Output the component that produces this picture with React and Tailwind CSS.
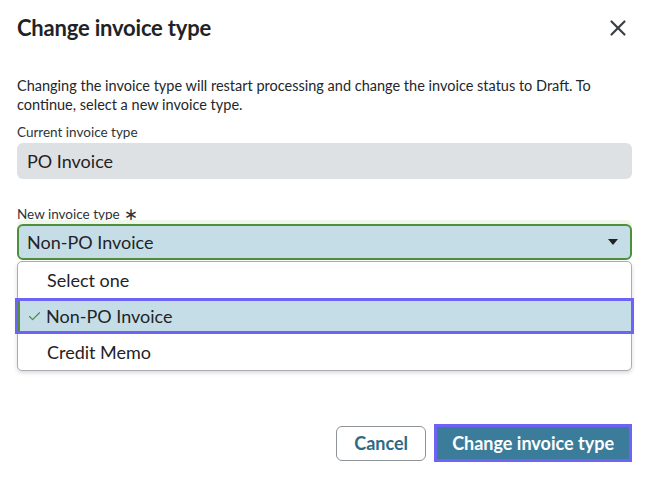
import { Check, X } from 'lucide-react'

const options = ['Select one', 'Non-PO Invoice', 'Credit Memo']

export default function App() {
  const selected = 'Non-PO Invoice'
  return (
    <div className="w-[649px] h-[500px] bg-white text-[#1f2326]" style={{ fontFamily: 'Lato, "Noto Sans", sans-serif' }}>
      <div className="flex items-center justify-between pl-[17px] pr-[18px] pt-[12px]">
        <h1 className="text-[22px] font-bold tracking-[-0.2px] leading-[32px]">Change invoice type</h1>
        <X size={26} strokeWidth={2} className="text-[#3a3f44]" />
      </div>

      <p className="px-[17px] mt-[32px] text-[14.5px] leading-[19px] text-[#23272b]">
        Changing the invoice type will restart processing and change the invoice status to Draft. To
        continue, select a new invoice type.
      </p>

      <div className="px-[17px] mt-[10px]">
        <div className="text-[13.5px] leading-[16px] text-[#2f3337]">Current invoice type</div>
        <div className="mt-[3px] h-[36px] rounded-[6px] bg-[#dde1e4] flex items-center px-[10px] text-[18px]">
          PO Invoice
        </div>

        <div className="mt-[27px] text-[13.5px] leading-[16px] text-[#2f3337] flex items-center">
          New invoice type
          <span className="ml-[4px] text-[17px] leading-[16px]" style={{ fontFamily: '"DejaVu Sans", sans-serif' }}>∗</span>
        </div>
        <div className="mt-[2px] relative">
          <div className="h-[36px] rounded-[6px] border-2 border-[#4f8f3c] bg-[#c5dde6] flex items-center justify-between pl-[8px] pr-[12px] text-[18px] shadow-[0_-4px_0_0_#eef5ea]">
            <span>Non-PO Invoice</span>
            <svg width="10" height="6" viewBox="0 0 10 6">
              <path d="M0 0h10L5 6z" fill="#1f2326" />
            </svg>
          </div>
          <ul className="mt-px rounded-[5px] border border-[#a9adb1] bg-white shadow-[0_2px_4px_rgba(0,0,0,0.15)] text-[18px]">
            {options.map((o) =>
              o === selected ? (
                <li key={o} className="-mx-[3px] h-[36px] border-[3px] border-[#6f63f5] bg-[#c5dde6]">
                  <div className="h-full flex items-center border-l-2 border-[#4f8f3c] pl-[7px]">
                    <Check size={15} strokeWidth={1.75} className="text-[#4a8a3a] mr-[4px]" />
                    {o}
                  </div>
                </li>
              ) : (
                <li key={o} className="h-[36px] flex items-center pl-[29px]">{o}</li>
              )
            )}
          </ul>
        </div>
      </div>

      <div className="flex justify-end items-center gap-[8px] pr-[17px] mt-[53px]">
        <button className="h-[35px] w-[90px] rounded-[6px] border border-[#8e9397] text-[#2f6a84] font-bold text-[18px]">
          Cancel
        </button>
        <button className="border-[3px] border-[#6f63f5] p-0">
          <div className="h-[32px] px-[15px] flex items-center bg-[#3a7c9a] text-white font-bold text-[18px]">
            Change invoice type
          </div>
        </button>
      </div>
    </div>
  )
}
